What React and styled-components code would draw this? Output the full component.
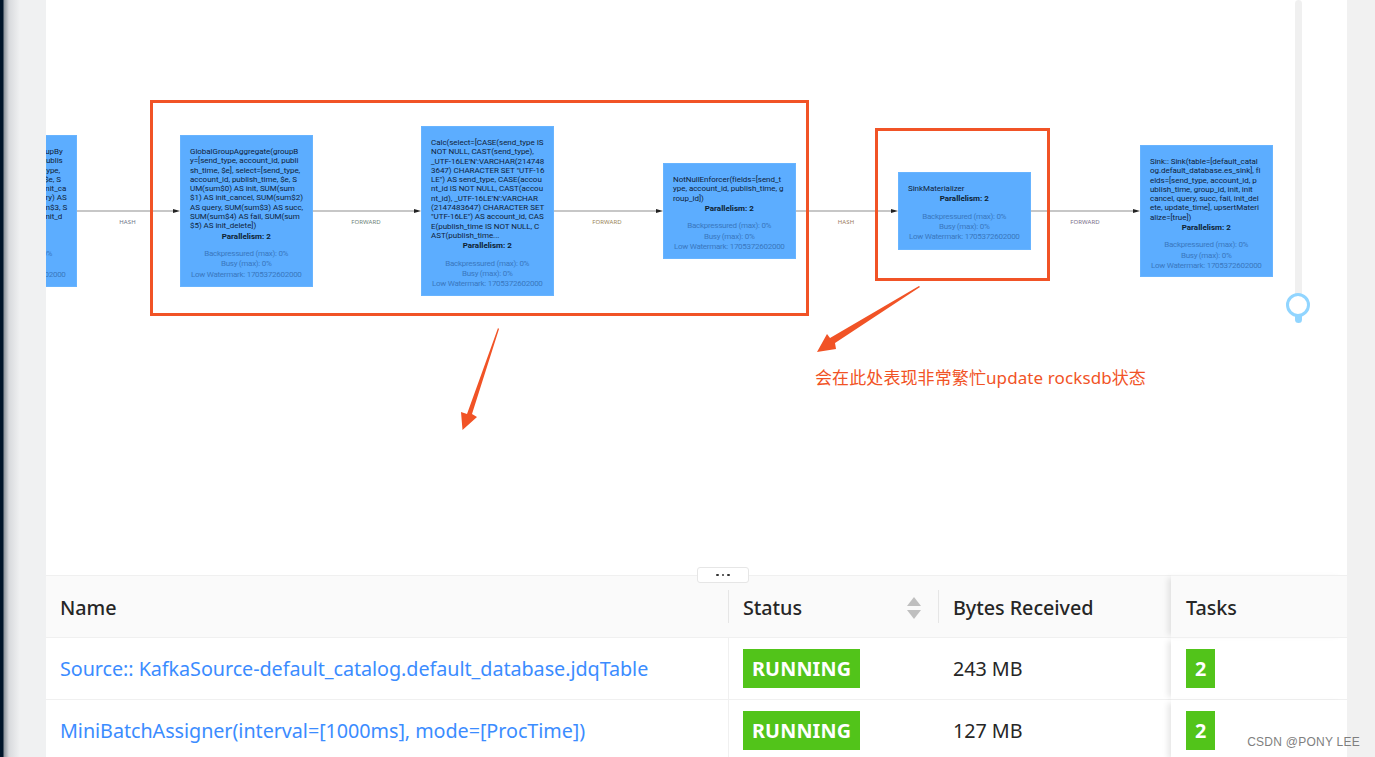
import React from "react";
import styled, { createGlobalStyle } from "styled-components";

const Global = createGlobalStyle`
  html, body { margin: 0; padding: 0; background: #fff; }
  body { font-family: "Noto Sans", "Noto Sans CJK SC", sans-serif; }
  * { box-sizing: border-box; }
`;

const RED = "#f15326";

const Page = styled.div`
  position: relative;
  display: flex;
  width: 1375px;
  height: 757px;
  overflow: hidden;
  background: #f0f1f3;
`;
const Side = styled.div`
  flex: 0 0 46px;
  background: linear-gradient(90deg, #001529 0, #001529 3px, #8e959c 4px, #d8dadd 9px, #f0f1f2 20px);
`;
const Main = styled.main`
  position: relative;
  flex: 0 0 1301px;
  display: flex;
  flex-direction: column;
  background: #fff;
`;
const Gutter = styled.div`
  flex: 0 0 28px;
  background: #f1f1f1;
`;
const Canvas = styled.section`
  position: relative;
  flex: 0 0 575px;
  overflow: hidden;
`;
const Edges = styled.svg`
  position: absolute;
  inset: 0;
`;
const Node = styled.div`
  position: absolute;
  left: ${(p) => p.$x}px;
  top: ${(p) => p.$y}px;
  width: 132.5px;
  height: ${(p) => p.$h}px;
  padding: 11px 9px 0;
  background: #5cadff;
  border: 1px solid #68b4ff;
  font-family: Roboto, sans-serif;
  font-size: 8px;
  line-height: 9.3px;
  letter-spacing: -0.04px;
  color: #10233a;
  white-space: nowrap;
`;
const Para = styled.div`
  margin-top: 1px;
  text-align: center;
  font-weight: 700;
  letter-spacing: 0;
  color: #0c1e32;
`;
const Metrics = styled.div`
  margin-top: 8px;
  text-align: center;
  color: #3a78c0;
  line-height: 10.4px;
  letter-spacing: -0.27px;
`;
const EdgeLabel = styled.span`
  position: absolute;
  left: ${(p) => p.$x}px;
  top: 218.5px;
  transform: translateX(-50%);
  font-size: 6px;
  line-height: 7px;
  letter-spacing: 0.1px;
  color: ${(p) => p.$c};
`;
const SliderTrack = styled.div`
  position: absolute;
  left: 1249px;
  top: 0;
  width: 7px;
  height: 323px;
  border-radius: 4px;
  background: linear-gradient(180deg, #f0f0f0 0, #f0f0f0 295px, #91d5ff 295px);
`;
const SliderHandle = styled.div`
  position: absolute;
  left: 1240px;
  top: 293px;
  width: 24px;
  height: 24px;
  border-radius: 50%;
  background: #fff;
  border: 3px solid #91d5ff;
`;
const Box = styled.div`
  position: absolute;
  left: ${(p) => p.$x}px;
  top: ${(p) => p.$y}px;
  width: ${(p) => p.$w}px;
  height: ${(p) => p.$h}px;
  border: 3px solid ${RED};
`;
const Note = styled.div`
  position: absolute;
  left: 769px;
  top: 366px;
  font-size: 17px;
  line-height: 24px;
  letter-spacing: 0.1px;
  color: ${RED};
  white-space: nowrap;
`;
const Handle = styled.div`
  position: absolute;
  left: 651px;
  top: 567px;
  width: 52px;
  height: 16px;
  display: flex;
  align-items: center;
  justify-content: center;
  gap: 3px;
  background: #fff;
  border: 1px solid #e6e6e6;
  border-radius: 3px;
  z-index: 2;
`;
const Dot = styled.i`
  width: 2.5px;
  height: 2.5px;
  border-radius: 50%;
  background: #333;
`;
const Table = styled.table`
  width: 1301px;
  table-layout: fixed;
  border-collapse: separate;
  border-spacing: 0;
  font-size: 19.75px;
  letter-spacing: -0.05px;
  color: #262626;
`;
const Th = styled.th`
  position: relative;
  height: 63px;
  padding: 2px ${(p) => (p.$fixed ? "14px 0 15px" : "14px 0")};
  text-align: left;
  font-weight: 500;
  line-height: 26px;
  background: #fafafa;
  border-top: 1px solid #f0f0f0;
  border-bottom: 1px solid #f0f0f0;
  ${(p) => p.$fixed && "box-shadow: -6px 0 6px -3px rgba(0,0,0,0.1);"}
  ${(p) =>
    p.$divider &&
    `&::after {
      content: "";
      position: absolute;
      right: 0;
      top: 14px;
      height: 33px;
      width: 1px;
      background: #e6e6e6;
    }`}
`;
const Td = styled.td`
  height: 62px;
  padding: 0 14px 0 ${(p) => (p.$fixed ? "15px" : "14px")};
  line-height: 26px;
  background: #fff;
  border-bottom: 1px solid #f0f0f0;
  ${(p) => p.$line && "border-right: 1px solid #f0f0f0;"}
  ${(p) => p.$fixed && "box-shadow: -6px 0 6px -3px rgba(0,0,0,0.1);"}
`;
const HeadInner = styled.div`
  display: flex;
  align-items: center;
  justify-content: space-between;
`;
const Sorter = styled.svg`
  flex: none;
  margin-right: 3px;
`;
const LinkText = styled.a`
  color: #3b8cff;
  white-space: nowrap;
`;
const Tag = styled.span`
  display: inline-block;
  height: 39px;
  line-height: 39px;
  padding: 0 9px;
  background: #52c41a;
  color: #fff;
  font-weight: 700;
  letter-spacing: 0.15px;
  vertical-align: middle;
`;
const Credit = styled.div`
  position: absolute;
  right: 15px;
  top: 734px;
  font-family: "Liberation Sans", sans-serif;
  font-size: 12px;
  line-height: 16px;
  letter-spacing: 0.25px;
  color: #7f7f7f;
  z-index: 4;
`;
const MarkLayer = styled.div`
  position: absolute;
  left: -25px;
  top: 0;
  display: grid;
  grid-template-columns: repeat(8, 200px);
  grid-auto-rows: 130px;
  pointer-events: none;
  z-index: 3;
`;
const Mark = styled.span`
  display: flex;
  align-items: center;
  justify-content: center;
  font-size: 15px;
  color: rgba(0, 0, 0, 0.025);
  transform: rotate(-23deg);
  white-space: nowrap;
`;

const METRIC = ["Backpressured (max): 0%", "Busy (max): 0%", "Low Watermark: 1705372602000"];
const nodes = [
  {
    x: -102, y: 135, h: 152,
    lines: [
      "LocalGroupAggregate(groupBy",
      "=[send_type, account_id, publis",
      "h_time, $e], select=[send_type,",
      "account_id, publish_time, $e, S",
      "UM(init) AS sum$0, SUM(init_ca",
      "ncel) AS sum$1, SUM(query) AS",
      "sum$2, SUM(succ) AS sum$3, S",
      "UM(fail) AS sum$4, SUM(init_d",
      "elete) AS sum$5])",
    ],
  },
  {
    x: 134, y: 135, h: 152,
    lines: [
      "GlobalGroupAggregate(groupB",
      "y=[send_type, account_id, publi",
      "sh_time, $e], select=[send_type,",
      "account_id, publish_time, $e, S",
      "UM(sum$0) AS init, SUM(sum",
      "$1) AS init_cancel, SUM(sum$2)",
      "AS query, SUM(sum$3) AS succ,",
      "SUM(sum$4) AS fail, SUM(sum",
      "$5) AS init_delete])",
    ],
  },
  {
    x: 375, y: 126, h: 170,
    lines: [
      "Calc(select=[CASE(send_type IS",
      "NOT NULL, CAST(send_type),",
      "_UTF-16LE'N':VARCHAR(214748",
      "3647) CHARACTER SET \"UTF-16",
      "LE\") AS send_type, CASE(accou",
      "nt_id IS NOT NULL, CAST(accou",
      "nt_id), _UTF-16LE'N':VARCHAR",
      "(2147483647) CHARACTER SET",
      "\"UTF-16LE\") AS account_id, CAS",
      "E(publish_time IS NOT NULL, C",
      "AST(publish_time...",
    ],
  },
  {
    x: 617, y: 163, h: 96,
    lines: [
      "NotNullEnforcer(fields=[send_t",
      "ype, account_id, publish_time, g",
      "roup_id])",
    ],
  },
  { x: 852, y: 172, h: 78, lines: ["SinkMaterializer"] },
  {
    x: 1094, y: 145, h: 132,
    lines: [
      "Sink:: Sink(table=[default_catal",
      "og.default_database.es_sink], fi",
      "elds=[send_type, account_id, p",
      "ublish_time, group_id, init, init",
      "cancel, query, succ, fail, init_del",
      "ete, update_time], upsertMateri",
      "alize=[true])",
    ],
  },
];
const edges = [
  [30, 134, 81.5, "HASH", "#6f7488"],
  [266, 375, 320, "FORWARD", "#6e8378"],
  [508, 617, 561, "FORWARD", "#9a8557"],
  [749, 852, 800, "HASH", "#9a7b60"],
  [985, 1094, 1039, "FORWARD", "#7a6f8a"],
];
const rows = [
  ["Source:: KafkaSource-default_catalog.default_database.jdqTable", "243 MB"],
  ["MiniBatchAssigner(interval=[1000ms], mode=[ProcTime])", "127 MB"],
];

export default function App() {
  return (
    <Page>
      <Global />
      <Side />
      <Main>
        <Canvas>
          <Edges width="1301" height="575" viewBox="0 0 1301 575">
            {edges.map(([a, b]) => (
              <g key={a}>
                <line x1={a} y1="211" x2={b - 6} y2="211" stroke="#b4b4b4" strokeWidth="1.3" />
                <polygon points={`${b - 7},209 ${b},211 ${b - 7},213`} fill="#222" />
              </g>
            ))}
            <polygon points="452,328 453,329 426,414 431,417 416.5,430 415,412 421,414" fill={RED} />
            <polygon points="873,286 874,287 789,343 790,349 771,352 781,334 784,338" fill={RED} />
          </Edges>
          {edges.map(([a, , c, label, color]) => (
            <EdgeLabel key={a} $x={c} $c={color}>{label}</EdgeLabel>
          ))}
          {nodes.map((n) => (
            <Node key={n.x} $x={n.x} $y={n.y} $h={n.h}>
              {n.lines.map((l) => (
                <div key={l}>{l}</div>
              ))}
              <Para>Parallelism: 2</Para>
              <Metrics>
                {METRIC.map((m) => (
                  <div key={m}>{m}</div>
                ))}
              </Metrics>
            </Node>
          ))}
          <SliderTrack />
          <SliderHandle />
          <Box $x={104} $y={100} $w={659} $h={216} />
          <Box $x={829} $y={128} $w={175} $h={153} />
          <Note>会在此处表现非常繁忙update rocksdb状态</Note>
        </Canvas>
        <Handle>
          <Dot />
          <Dot />
          <Dot />
        </Handle>
        <Table>
          <colgroup>
            <col width="683" />
            <col width="210" />
            <col width="232" />
            <col width="176" />
          </colgroup>
          <thead>
            <tr>
              <Th $divider>Name</Th>
              <Th $divider>
                <HeadInner>
                  Status
                  <Sorter width="16" height="24" viewBox="0 0 16 24">
                    <polygon points="8,1 15,10 1,10" fill="#bfbfbf" />
                    <polygon points="1,14 15,14 8,23" fill="#bfbfbf" />
                  </Sorter>
                </HeadInner>
              </Th>
              <Th>Bytes Received</Th>
              <Th $fixed>Tasks</Th>
            </tr>
          </thead>
          <tbody>
            {rows.map(([name, bytes]) => (
              <tr key={name}>
                <Td $line><LinkText>{name}</LinkText></Td>
                <Td><Tag>RUNNING</Tag></Td>
                <Td>{bytes}</Td>
                <Td $fixed><Tag>2</Tag></Td>
              </tr>
            ))}
          </tbody>
        </Table>
      </Main>
      <Gutter />
      <Credit>CSDN @PONY LEE</Credit>
      <MarkLayer>
        {Array.from({ length: 48 }, (_, i) => (
          <Mark key={i}>lijianjun46-705372</Mark>
        ))}
      </MarkLayer>
    </Page>
  );
}
